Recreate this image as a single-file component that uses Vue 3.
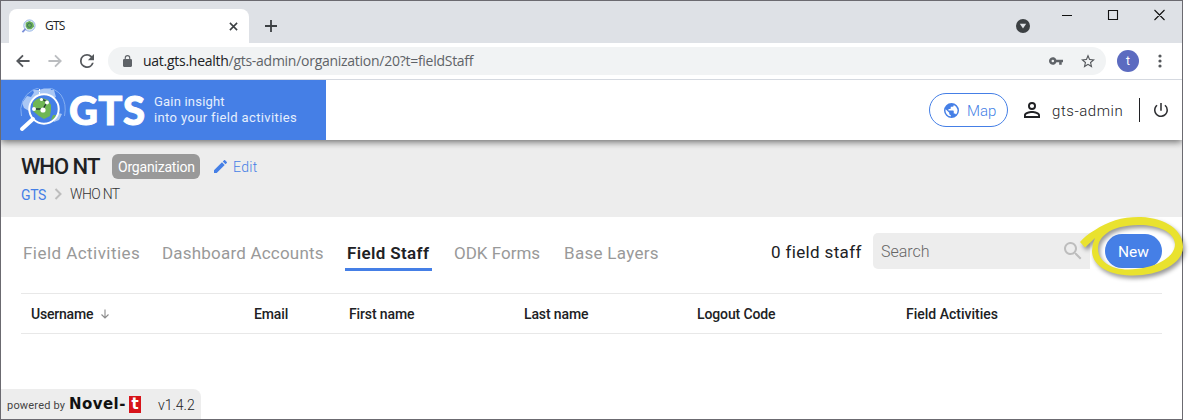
<script setup>
const tabs = [
  { label: 'Field Activities', cls: 'a' },
  { label: 'Dashboard Accounts', cls: 'b' },
  { label: 'Field Staff', cls: 'c active' },
  { label: 'ODK Forms', cls: 'd' },
  { label: 'Base Layers', cls: 'e' },
]
const columns = [
  { label: 'Username', cls: 'u', sorted: true },
  { label: 'Email', cls: 'em' },
  { label: 'First name', cls: 'fn' },
  { label: 'Last name', cls: 'ln' },
  { label: 'Logout Code', cls: 'lc' },
  { label: 'Field Activities', cls: 'fa' },
]
</script>

<template>
  <div class="window">
    <div class="tabstrip">
      <div class="browser-tab">
        <svg class="favicon" viewBox="0 0 16 16">
          <circle cx="9" cy="7" r="6" fill="#e8f0fb" stroke="#8fb0e4" stroke-width="1" />
          <path d="M5 4 9 2l4 2 1 4-3 3-4 0-2-3z" fill="#68ad58" />
          <circle cx="9" cy="6.7" r="2.2" fill="none" stroke="#3d6f63" />
          <path d="M5 10.5 1.5 14" stroke="#7d91d9" stroke-width="2" />
        </svg>
        <span class="tab-title">GTS</span>
        <svg class="tab-close" viewBox="0 0 10 10"><path d="M1 1l8 8M9 1L1 9" stroke="#3c4043" stroke-width="1.7" /></svg>
      </div>
      <svg class="plus" viewBox="0 0 12 12"><path d="M6 0v12M0 6h12" stroke="#3c4043" stroke-width="1.8" /></svg>
      <svg class="drop" viewBox="0 0 14 14"><circle cx="7" cy="7" r="7" fill="#3c4043" /><path d="M3.8 4.8h6.4L7 9.6z" fill="#dee1e6" /></svg>
      <svg class="controls" viewBox="0 0 104 12">
        <path d="M0 6.500h10M46.500 1.500h9v9h-9zM92.500 1l10 10M102.500 1l-10 10" fill="none" stroke="#111" stroke-width="1.1" />
      </svg>
    </div>

    <div class="toolbar">
      <svg class="nav back" viewBox="0 0 16 16"><path d="M15.500 8H2M8 1.500 1.500 8 8 14.500" fill="none" stroke="#55585c" stroke-width="2.100" /></svg>
      <svg class="nav forward" viewBox="0 0 16 16"><path d="M.5 8h13M8 1.500 14.500 8 8 14.500" fill="none" stroke="#bbbdc0" stroke-width="2.100" /></svg>
      <svg class="nav reload" viewBox="4 4 16 16"><path d="M17.650 6.350A7.960 7.960 0 0 0 12 4a8 8 0 1 0 7.730 10h-2.080A6 6 0 1 1 12 6c1.660 0 3.140.69 4.220 1.780L13 11h7V4z" fill="#55585c" /></svg>
      <div class="address">
        <svg class="lock" viewBox="4 1 16 21"><path d="M18 8h-1V6A5 5 0 0 0 7 6v2H6a2 2 0 0 0-2 2v10c0 1.100.9 2 2 2h12a2 2 0 0 0 2-2V10a2 2 0 0 0-2-2zM9 6a3 3 0 0 1 6 0v2H9z" fill="#5f6368" /></svg>
        <span class="url"><b>uat.gts.health</b>/gts-admin/organization/20?t=fieldStaff</span>
        <svg class="key" viewBox="1 6 22 12"><path d="M12.650 10A6 6 0 1 0 12.650 14H17v4h4v-4h2v-4zM7 14a2 2 0 1 1 0-4 2 2 0 0 1 0 4z" fill="#5f6368" /></svg>
        <svg class="star" viewBox="2 2 20 19"><path d="M22 9.240l-7.190-.62L12 2 9.190 8.630 2 9.240l5.460 4.730L5.820 21 12 17.270 18.180 21l-1.630-7.030zM12 15.400l-3.760 2.270 1-4.280-3.320-2.880 4.380-.38L12 6.100l1.710 4.040 4.380.38-3.320 2.880 1 4.280z" fill="#55585c" /></svg>
      </div>
      <span class="avatar">t</span>
      <svg class="dots" viewBox="0 0 4 14"><circle cx="2" cy="2" r="1.600" fill="#55585c" /><circle cx="2" cy="7" r="1.600" fill="#55585c" /><circle cx="2" cy="12" r="1.600" fill="#55585c" /></svg>
    </div>

    <header class="app-header">
      <div class="brand">
        <svg class="logo" viewBox="0 0 48 44">
          <path d="M16 3 25 .500h7L31 7h-5l-4 4-8 4-4 8-5-3-2-5 5-7 4 1zM36 24l7 2-3 6-5 2-2-4z" fill="#a9c7f5" />
          <path d="M14 2h21l2 7-6 3-14-1z" fill="#a9c7f5" />
          <path d="M2.500 28A23 23 0 0 1 42 7q6 9 3.500 21" fill="none" stroke="#83aef1" stroke-width="1" />
          <path d="M20.500 1v7" stroke="#fff" stroke-width="1" stroke-dasharray="2 1" />
          <circle cx="25" cy="21" r="14.500" fill="#457fe6" />
          <path d="M14 15q3-5 9-5l6 2 3 5 0 5-1 6-6 3-5-3-6-5z" fill="#6fb654" /><path d="M34 27l3 0-2 4-3 1z" fill="#6fb654" />
          <path d="M15 21h9l4-7-5-3" fill="none" stroke="#263c35" stroke-width="1.400" />
          <circle cx="15" cy="21" r="2" fill="#fff" /><circle cx="24" cy="22" r="2.600" fill="#fff" /><circle cx="28" cy="14.500" r="2" fill="#fff" /><circle cx="22.500" cy="11.500" r="1.600" fill="#fff" />
          <circle cx="25" cy="21" r="14.700" fill="none" stroke="#fff" stroke-width="2" />
          <path d="M14 31 3 41" stroke="#fff" stroke-width="4" stroke-linecap="round" />
        </svg>
        <span class="wordmark">GTS</span>
        <div class="tagline"><span class="t1">Gain insight</span><span class="t2">into your field activities</span></div>
      </div>
      <div class="map-btn">
        <svg viewBox="2 2 20 20"><path d="M12 2a10 10 0 1 0 0 20 10 10 0 0 0 0-20zm-1 17.930A8 8 0 0 1 4.210 10.210L9 15v1a2 2 0 0 0 2 2zm6.900-2.540A2 2 0 0 0 16 16h-1v-3a1 1 0 0 0-1-1H8v-2h2a1 1 0 0 0 1-1V7h2a2 2 0 0 0 2-2v-.41a8 8 0 0 1 2.900 12.800z" fill="#457fe6" /></svg>
        <span>Map</span>
      </div>
      <svg class="person" viewBox="4 4 16 16"><path d="M12 5.900a2.100 2.100 0 1 1 0 4.200 2.100 2.100 0 0 1 0-4.200m0 9c2.970 0 6.100 1.460 6.100 2.100v1.100H5.900V17c0-.64 3.130-2.100 6.100-2.100M12 4a4 4 0 1 0 0 8 4 4 0 0 0 0-8zm0 9c-2.670 0-8 1.340-8 4v3h16v-3c0-2.660-5.330-4-8-4z" fill="#202124" /></svg>
      <span class="user">gts-admin</span>
      <span class="bar"></span>
      <svg class="power" viewBox="3 3 18 18"><path d="M13 3h-2v10h2zm4.830 2.170-1.420 1.420A6.920 6.920 0 0 1 19 12 7 7 0 1 1 7.580 6.580L6.170 5.170A9 9 0 1 0 21 12a8.960 8.960 0 0 0-3.170-6.830z" fill="#303134" /></svg>
    </header>

    <section class="org">
      <div class="org-row">
        <h1>WHO NT</h1>
        <span class="badge"><span>Organization</span></span>
        <svg class="pencil" viewBox="3 3 18 18"><path d="M3 17.250V21h3.750L17.810 9.940l-3.750-3.750zM20.710 7.040a1 1 0 0 0 0-1.410l-2.340-2.340a1 1 0 0 0-1.410 0l-1.830 1.830 3.750 3.750z" fill="#457fe6" /></svg>
        <span class="edit">Edit</span>
      </div>
      <div class="crumbs">
        <span class="crumb-link">GTS</span>
        <svg viewBox="0 0 8 12"><path d="M1.500 1 6.500 6l-5 5" fill="none" stroke="#bdbdbd" stroke-width="2" /></svg>
        <span class="crumb">WHO NT</span>
      </div>
    </section>

    <main>
      <div class="controls-row">
        <nav class="tabs"><span v-for="t in tabs" :key="t.label" class="tab" :class="t.cls">{{ t.label }}</span></nav>
        <span class="count">0 field staff</span>
        <div class="search">
          <span>Search</span>
          <svg viewBox="3 3 18 18"><path d="M15.500 14h-.79l-.28-.27A6.500 6.500 0 1 0 13.730 14.430l.27.28v.79l5 4.990L20.490 19zm-6 0a4.500 4.500 0 1 1 0-9 4.500 4.500 0 0 1 0 9z" fill="#bdbdbd" /></svg>
        </div>
        <div class="new-wrap">
          <span class="new">New</span>
          <svg class="marker" viewBox="0 0 112 76">
            <path fill-rule="evenodd" d="M2 33Q8 26 17 21C30 12 46 7.500 63 8C88 9 105 21 105 38C105 55 80 67 53 66.500C28 66 14 55 14 42Q14 35 17 29L7 38.500ZM29 24C22 29 20 34 20 40C20 52 33 60.500 50 60.500C76 60 97 49 97 35C96 22 78 15.500 60 16C46 16.500 35 19 29 24Z" fill="#e9e22e" />
          </svg>
        </div>
      </div>
      <div class="thead">
        <span v-for="c in columns" :key="c.label" class="th"><span :class="c.cls">{{ c.label }}</span><svg v-if="c.sorted" viewBox="0 0 10 10"><path d="M5 .500v8M1.500 5.500 5 9l3.500-3.500" fill="none" stroke="#8b8b8b" stroke-width="1.100" /></svg></span>
      </div>
    </main>

    <footer>
      <span class="powered">powered by</span>
      <span class="novel">Novel-</span><span class="novel-t">t</span>
      <span class="version">v1.4.2</span>
    </footer>
  </div>
</template>

<style>
body { background: #fff; }
</style>

<style scoped>
* { box-sizing: border-box; }
svg { display: block; flex: none; }
span { white-space: nowrap; }
.window {
  width: 1183px; height: 420px; border: 1px solid #6b6a70; background: #fff;
  font-family: Roboto, "Liberation Sans", sans-serif; color: #202124;
  display: flex; flex-direction: column; position: relative;
}
.tabstrip { height: 42px; flex: none; background: #dee1e6; display: flex; position: relative; }
.browser-tab {
  width: 240px; height: 34px; margin: 8px 0 0 8px; border-radius: 8px 8px 0 0; background: #fff;
  display: flex; align-items: center; padding: 0 11px 0 12px;
}
.favicon { width: 15px; height: 15px; }
.tab-title { font: 12px/16px "Open Sans", sans-serif; letter-spacing: -.8px; margin-left: 9px; flex: 1; }
.tab-close { width: 9px; height: 9px; }
.plus { width: 12px; height: 12px; margin: 19px 0 0 16px; }
.drop { width: 14px; height: 14px; margin: 18px 0 0 auto; }
.controls { width: 104px; height: 12px; margin: 8px 16px 0 32px; }
.toolbar { height: 37px; flex: none; display: flex; align-items: center; padding-left: 15px; border-bottom: 1px solid #d5d9e0; background: #fff; }
.nav { width: 14px; height: 14px; }
.forward, .reload { margin-left: 18px; }
.address { height: 28px; width: 998px; margin-left: 14px; border-radius: 14px; background: #f1f3f4; display: flex; align-items: center; padding: 0 11px 0 15px; }
.lock { width: 9px; height: 12px; }
.url { font: 14px/20px "Open Sans", sans-serif; letter-spacing: -.27px; color: #5f6368; margin-left: 11px; flex: 1; }
.url b { font-weight: 400; color: #202124; }
.key { width: 14px; height: 8px; }
.star { width: 14px; height: 14px; margin-left: 18px; }
.avatar { width: 22px; height: 22px; border-radius: 50%; background: #5c6bc0; color: #fff; font-size: 12px; line-height: 22px; text-align: center; margin-left: 11px; }
.dots { width: 4px; height: 14px; margin-left: 19px; }
.app-header { height: 60px; flex: none; display: flex; align-items: center; background: #fff; box-shadow: 0 2px 7px rgba(0,0,0,.55); clip-path: inset(0 0 -10px 0); z-index: 1; position: relative; }
.brand { width: 325px; height: 60px; background: #457fe6; display: flex; align-items: center; color: #fff; padding-left: 18px; }
.logo { width: 48px; height: 44px; }
.wordmark { font: 900 40px/44px Lato, sans-serif; width: 77px; margin-left: 2px; -webkit-text-stroke: 1px #fff; letter-spacing: .4px; }
.tagline { display: flex; flex-direction: column; font-size: 13px; line-height: 16px; margin-left: 8px; color: #e6effd; }
.t1 { letter-spacing: .2px; }
.t2 { letter-spacing: .37px; }
.map-btn { width: 79px; height: 34px; margin-left: auto; border: 1px solid #457fe6; border-radius: 17px; display: flex; align-items: center; padding-left: 14px; color: #457fe6; font-size: 15px; }
.map-btn svg { width: 15px; height: 15px; margin-right: 8px; }
.map-btn span { padding-top: 1px; font-weight: 300; }
.person { width: 16px; height: 16px; margin-left: 16px; }
.user { width: 71px; font-size: 15px; font-weight: 300; letter-spacing: .55px; margin-left: 12px; padding-top: 1px; }
.bar { width: 1px; height: 24px; background: #202124; margin-left: 16px; }
.power { width: 14px; height: 14px; margin: 0 14px 0 14px; }
.org { height: 77px; flex: none; background: #ededed; padding: 13px 0 0 20px; }
.org-row { display: flex; align-items: center; height: 27px; }
h1 { width: 91px; margin: 0; font-size: 22px; line-height: 26px; font-weight: 500; letter-spacing: -1px; padding-top: 1px; white-space: nowrap; }
.badge { width: 88px; height: 25px; border-radius: 6px; background: #999; color: #fff; font-size: 14px; line-height: 26px; letter-spacing: -.2px; padding-left: 6px; }
.pencil { width: 13px; height: 13px; margin: 0 6px 0 14px; }
.edit { color: #457fe6; font-size: 14px; font-weight: 300; letter-spacing: .3px; padding-top: 1px; }
.crumbs { display: flex; align-items: center; height: 27px; font-size: 14px; line-height: 18px; }
.crumb-link { color: #457fe6; width: 33px; letter-spacing: -.4px; padding-top: 3px; }
.crumbs svg { width: 8px; height: 12px; margin-top: 1px; }
.crumb { margin-left: 8px; color: #333; font-weight: 300; letter-spacing: -.65px; }
main { padding: 16px 20px 0; }
.controls-row { display: flex; height: 36px; }
.tabs { display: flex; height: 38px; }
.tab { font-size: 17px; line-height: 40px; height: 38px; color: #8f8f8f; font-weight: 300; padding-left: 2px; }
.a { width: 139px; letter-spacing: .45px; } .b { width: 185px; letter-spacing: .2px; }
.c { width: 87px; margin-right: 20px; letter-spacing: .35px; } .d { width: 110px; } .e { width: 100px; letter-spacing: .3px; }
.tab.a, .tab.b, .tab.d, .tab.e { font-weight: 400; color: #999; }
.tab.active { color: #202124; font-weight: 600; border-bottom: 3px solid #457fe6; }
.count { font-size: 17px; line-height: 39px; width: 90px; letter-spacing: .35px; margin-left: auto; margin-right: 12px; }
.search { width: 217px; height: 36px; background: #ededed; border-radius: 5px 0 0 5px; display: flex; align-items: center; justify-content: space-between; padding: 0 8px 0 8px; font-size: 16px; color: #666; font-weight: 300; }
.search svg { width: 18px; height: 18px; }
.new-wrap { position: relative; width: 72px; height: 36px; padding: 1px 0 0 15px; }
.new { display: block; width: 57px; height: 34px; border-radius: 17px; background: #457fe6; color: #fff; font-size: 15.500px; line-height: 36px; text-align: center; }
.marker { position: absolute; width: 112px; height: 76px; left: -12px; top: -24px; filter: drop-shadow(2px 3px 2px rgba(0,0,0,.4)); }
.thead { margin-top: 24px; height: 41px; border: solid #e8e8e8; border-width: 1px 0; display: grid; grid-template-columns: 223px 95px 175px 173px 209px 1fr; align-items: center; padding-left: 10px; font-size: 14px; line-height: 20px; font-weight: 500; }
.th { display: flex; align-items: center; }
.th svg { width: 10px; height: 10px; margin-left: 7px; }
.u { letter-spacing: -.2px; } .fn, .ln, .em, .lc { letter-spacing: -.12px; }
footer { position: absolute; left: 0; bottom: 0; width: 200px; height: 30px; background: #ededed; border-top-right-radius: 8px; display: flex; align-items: center; padding-left: 6px; }
.powered { font-size: 11px; width: 62px; padding-top: 2px; letter-spacing: .2px; color: #444; }
.novel { font: 700 15px/17px "DejaVu Sans", sans-serif; color: #111; width: 60px; letter-spacing: .45px; }
.novel-t { width: 12px; height: 17px; background: #d7141a; color: #fff; font: 700 15px/16px "DejaVu Sans", sans-serif; text-align: center; }
.version { font-size: 14px; font-weight: 300; margin-left: 17px; padding-top: 2px; }
</style>
